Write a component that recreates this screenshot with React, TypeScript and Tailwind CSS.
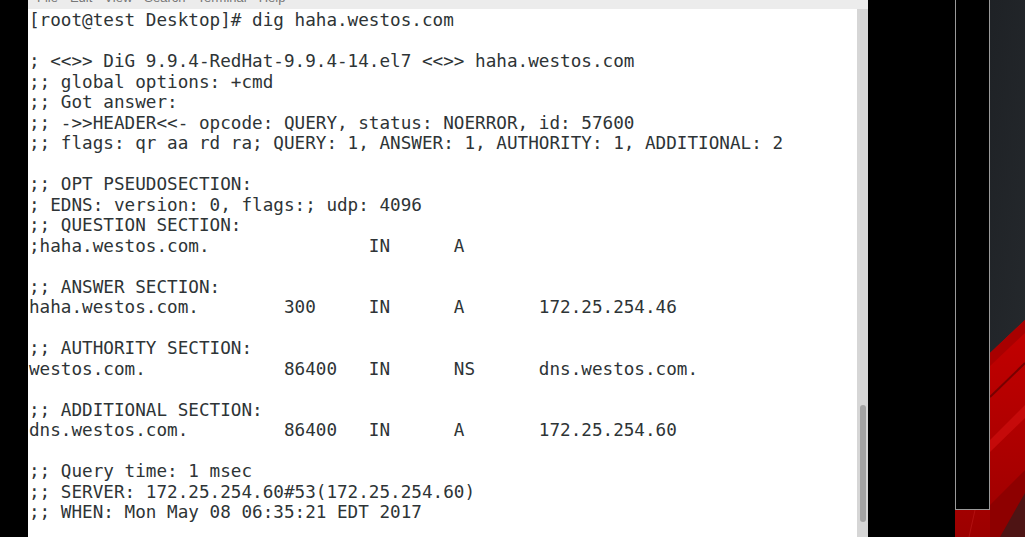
import React from "react";

const lines: string[] = [
  "[root@test Desktop]# dig haha.westos.com",
  "",
  "; <<>> DiG 9.9.4-RedHat-9.9.4-14.el7 <<>> haha.westos.com",
  ";; global options: +cmd",
  ";; Got answer:",
  ";; ->>HEADER<<- opcode: QUERY, status: NOERROR, id: 57600",
  ";; flags: qr aa rd ra; QUERY: 1, ANSWER: 1, AUTHORITY: 1, ADDITIONAL: 2",
  "",
  ";; OPT PSEUDOSECTION:",
  "; EDNS: version: 0, flags:; udp: 4096",
  ";; QUESTION SECTION:",
  ";haha.westos.com.               IN      A",
  "",
  ";; ANSWER SECTION:",
  "haha.westos.com.        300     IN      A       172.25.254.46",
  "",
  ";; AUTHORITY SECTION:",
  "westos.com.             86400   IN      NS      dns.westos.com.",
  "",
  ";; ADDITIONAL SECTION:",
  "dns.westos.com.         86400   IN      A       172.25.254.60",
  "",
  ";; Query time: 1 msec",
  ";; SERVER: 172.25.254.60#53(172.25.254.60)",
  ";; WHEN: Mon May 08 06:35:21 EDT 2017",
];

function Wallpaper() {
  return (
    <svg
      className="absolute inset-0 h-full w-full"
      viewBox="0 0 70 537"
      preserveAspectRatio="none"
    >
      <defs>
        <linearGradient id="dark" x1="0" y1="0" x2="1" y2="1">
          <stop offset="0" stopColor="#1c1f23" />
          <stop offset="1" stopColor="#262a2e" />
        </linearGradient>
        <linearGradient id="red" x1="0" y1="0" x2="0" y2="1">
          <stop offset="0" stopColor="#c40000" />
          <stop offset="1" stopColor="#9c0000" />
        </linearGradient>
      </defs>
      <rect x="0" y="0" width="70" height="537" fill="url(#dark)" />
      <polygon points="70,320 35,353 0,386 0,537 70,537" fill="url(#red)" />
      <polygon points="70,320 35,353 35,366 70,333" fill="#a80000" />
      <line x1="70" y1="363" x2="35" y2="397" stroke="#780000" strokeWidth="2" />
      <polygon points="70,405 35,440 35,452 70,418" fill="#d41010" opacity="0.6" />
      <polygon points="70,470 35,505 35,537 70,537" fill="#8e0000" />
      <polygon points="70,493 45,537 70,537" fill="#4e1414" />
      <line x1="20" y1="510" x2="14" y2="537" stroke="#c42020" strokeWidth="1" opacity="0.5" />
    </svg>
  );
}

export default function App() {
  return (
    <div className="flex h-[537px] w-[1025px] overflow-hidden bg-black">
      <div className="w-[28px] shrink-0 bg-black" />
      <div className="flex w-[840px] shrink-0 flex-col">
        <div className="relative h-[9px] shrink-0 overflow-hidden bg-[#ececec]">
          <div className="absolute left-[9px] top-[-9px] flex gap-[12px] whitespace-pre text-[13px] leading-[13px] text-[#777] [font-family:'Liberation_Sans',Arial,sans-serif]">
            <span>File</span>
            <span>Edit</span>
            <span>View</span>
            <span>Search</span>
            <span>Terminal</span>
            <span>Help</span>
          </div>
        </div>
        <div className="flex min-h-0 flex-1">
          <div className="flex-1 overflow-hidden bg-white pl-[1px] pt-[1px]">
            <pre className="m-0 whitespace-pre text-[17.65px] leading-[20.5px] text-[#2e3436] [font-family:'DejaVu_Sans_Mono',monospace]">
              {lines.map((l, i) => (
                <div key={i} className="h-[20.5px]">
                  {l}
                </div>
              ))}
            </pre>
          </div>
          <div className="relative w-[11px] shrink-0 bg-[#d6d6d6]">
            <div className="absolute left-[3px] top-[396px] h-[117px] w-[6px] rounded-full bg-[#a3a3a3]" />
          </div>
        </div>
      </div>
      <div className="w-[87px] shrink-0 bg-black" />
      <div className="relative flex flex-1">
        <Wallpaper />
        <div className="relative h-[510px] w-[35px] shrink-0 border-x border-b border-[#9a9a9a] bg-black" />
      </div>
    </div>
  );
}
